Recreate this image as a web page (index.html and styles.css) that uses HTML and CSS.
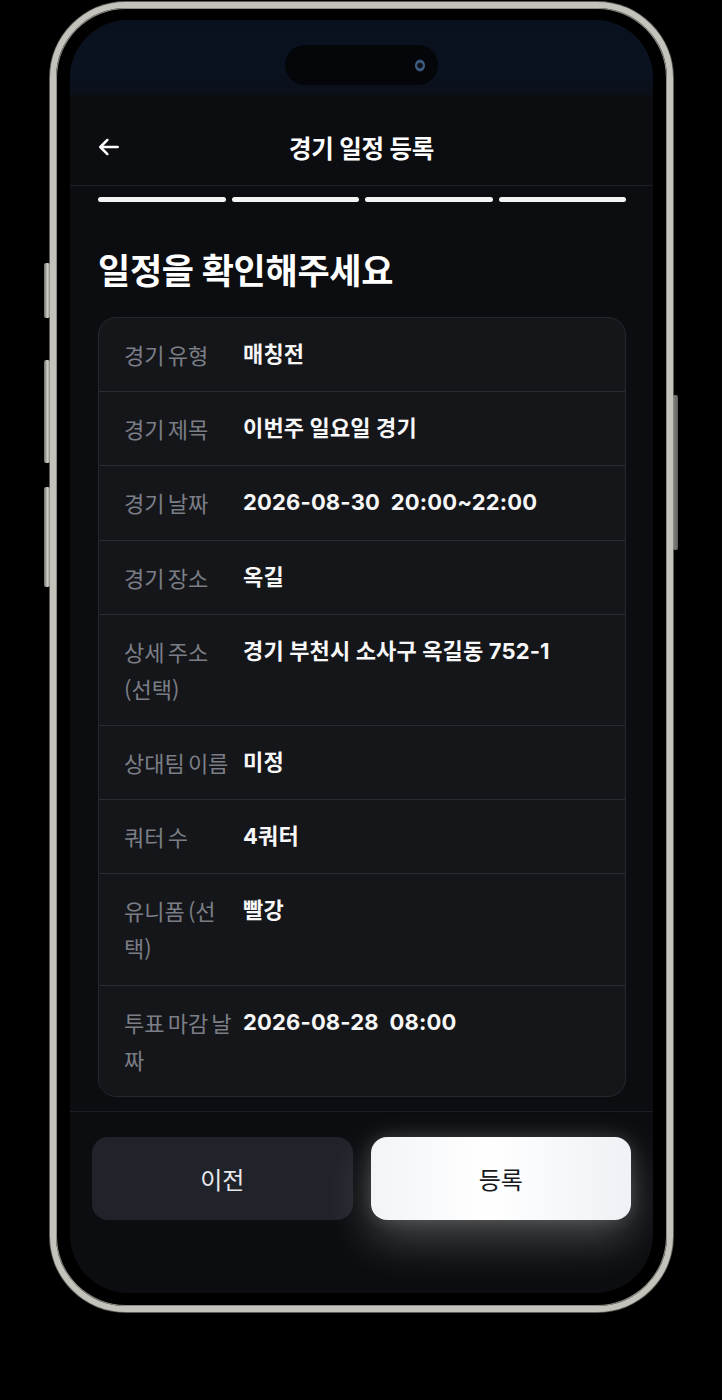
FILE: index.html
```html
<!DOCTYPE html>
<html lang="ko">
<head>
<meta charset="utf-8">
<title>경기 일정 등록</title>
<link rel="stylesheet" href="styles.css">
</head>
<body>
<div class="stage">
  <div class="phone">
    <span class="side-btn btn-action"></span>
    <span class="side-btn btn-vol-up"></span>
    <span class="side-btn btn-vol-down"></span>
    <span class="side-btn btn-power"></span>
    <div class="screen">
      <div class="status">
        <div class="island"><span class="lens"></span></div>
      </div>
      <header class="header">
        <button class="back" aria-label="뒤로">
          <svg width="26" height="26" viewBox="0 0 24 24" fill="none" stroke="#ffffff" stroke-width="2.3" stroke-linecap="round" stroke-linejoin="round"><path d="M20 12H4.5"/><path d="M10.5 5.5L4 12l6.5 6.5"/></svg>
        </button>
        <h1 class="title">경기 일정 등록</h1>
        <span class="spacer"></span>
      </header>
      <div class="progress">
        <span class="seg"></span><span class="seg"></span><span class="seg"></span><span class="seg"></span>
      </div>
      <main class="main">
        <h2 class="heading">일정을 확인해주세요</h2>
        <div class="card">
          <div class="row"><div class="label">경기 유형</div><div class="value">매칭전</div></div>
          <div class="row"><div class="label">경기 제목</div><div class="value">이번주 일요일 경기</div></div>
          <div class="row"><div class="label">경기 날짜</div><div class="value">2026-08-30&nbsp; 20:00~22:00</div></div>
          <div class="row"><div class="label">경기 장소</div><div class="value">옥길</div></div>
          <div class="row"><div class="label">상세 주소 (선택)</div><div class="value">경기 부천시 소사구 옥길동 752-1</div></div>
          <div class="row"><div class="label">상대팀 이름</div><div class="value">미정</div></div>
          <div class="row"><div class="label">쿼터 수</div><div class="value">4쿼터</div></div>
          <div class="row"><div class="label">유니폼 (선택)</div><div class="value">빨강</div></div>
          <div class="row"><div class="label">투표 마감 날짜</div><div class="value">2026-08-28&nbsp; 08:00</div></div>
        </div>
      </main>
      <footer class="footer">
        <button class="btn btn-prev">이전</button>
        <button class="btn btn-submit">등록</button>
      </footer>
    </div>
  </div>
</div>
</body>
</html>
```

FILE: styles.css
```css
html, body {
  margin: 0;
  padding: 0;
  background: #000;
}
body {
  width: 722px;
  height: 1400px;
  overflow: hidden;
  font-family: Inter, "Noto Sans CJK KR", sans-serif;
  color: #fff;
}
.stage {
  padding: 2px 0 0 50px;
}
.phone {
  position: relative;
  box-sizing: border-box;
  width: 623px;
  height: 1310px;
  border: 6px solid #c4c3bb;
  border-radius: 76px;
  padding: 12px 14px 13px;
  background: #000;
  box-shadow: 0 0 0 1px #5d5d59, inset 0 0 0 1px #8d8c86;
}
.side-btn {
  position: absolute;
  background: linear-gradient(90deg, #6f6f6b, #cfcec7 60%, #8b8a85);
  border-radius: 2px;
}
.btn-action { left: -12px; top: 255px; width: 6px; height: 55px; }
.btn-vol-up { left: -12px; top: 352px; width: 6px; height: 103px; }
.btn-vol-down { left: -12px; top: 479px; width: 6px; height: 100px; }
.btn-power { right: -11px; top: 387px; width: 5px; height: 155px; background: linear-gradient(90deg, #8b8a85, #5e5e5a); }

.screen {
  height: 100%;
  border-radius: 58px;
  overflow: hidden;
  background: #0c0d10;
  display: flex;
  flex-direction: column;
}
.status {
  height: 75px;
  flex: none;
  box-sizing: border-box;
  padding-top: 25px;
  display: flex;
  justify-content: center;
  background: linear-gradient(180deg, #09111f 0%, #0a1220 70%, #0b0f18 100%);
}
.island {
  width: 153px;
  height: 40px;
  border-radius: 20px;
  background: #050609;
  display: flex;
  align-items: center;
  justify-content: flex-end;
  padding-right: 13px;
  box-sizing: border-box;
}
.lens {
  width: 10px;
  height: 13px;
  border-radius: 50%;
  background: radial-gradient(circle at 50% 50%, #0a0d14 22%, #4a6d98 52%, #1a2a44 72%, transparent 90%);
}
.header {
  height: 91px;
  flex: none;
  box-sizing: border-box;
  border-bottom: 1px solid #1d1f24;
  display: grid;
  grid-template-columns: 60px 1fr 60px;
  align-items: center;
  padding: 14px 28px 0;
  background: #0c0d11;
}
.back {
  background: none;
  border: 0;
  padding: 0;
  width: 26px;
  height: 26px;
  display: flex;
  margin-left: -2px;
}
.title {
  margin: 0;
  text-align: center;
  font-size: 24.5px;
  font-weight: 700;
  letter-spacing: -0.2px;
}
.progress {
  flex: none;
  display: flex;
  gap: 6px;
  padding: 11px 27px 0 28px;
}
.seg {
  flex: 1;
  height: 5px;
  border-radius: 3px;
  background: #f4f4f5;
}
.main {
  flex: 1;
  padding: 0 27px 0 28px;
}
.heading {
  margin: 45px 0 0;
  font-size: 35px;
  line-height: 48px;
  font-weight: 700;
  letter-spacing: -0.3px;
}
.card {
  margin-top: 22px;
  border: 1px solid #26282d;
  border-radius: 18px;
  background: #15161a;
}
.row {
  display: flex;
  align-items: flex-start;
  padding: 18.1px 25px;
  border-bottom: 1px solid #2a2c31;
  font-size: 22px;
  line-height: 37px;
}
.row:last-child {
  border-bottom: 0;
}
.label {
  flex: none;
  width: 108px;
  margin-right: 11px;
  color: #7b7e86;
  font-family: "Noto Sans CJK KR", sans-serif;
  font-weight: 400;
  word-spacing: -3px;
}
.value {
  flex: 1;
  color: #f7f7f8;
  font-weight: 700;
  letter-spacing: 0.15px;
}
.footer {
  flex: none;
  border-top: 1px solid #1c1e23;
  padding: 25px 22px 73px;
  display: flex;
  gap: 18px;
}
.btn {
  flex: 1;
  height: 83px;
  border: 0;
  border-radius: 16px;
  font-family: Inter, "Noto Sans CJK KR", sans-serif;
  font-size: 24px;
  font-weight: 400;
}
.btn-prev {
  background: #21232b;
  color: #e6e7ea;
}
.btn-submit {
  background: linear-gradient(90deg, #f2f4f7 0%, #ffffff 45%, #eef1f5 100%);
  color: #17181c;
  box-shadow: 0 18px 46px rgba(255, 255, 255, 0.26), 0 0 18px rgba(255, 255, 255, 0.14);
}
```
